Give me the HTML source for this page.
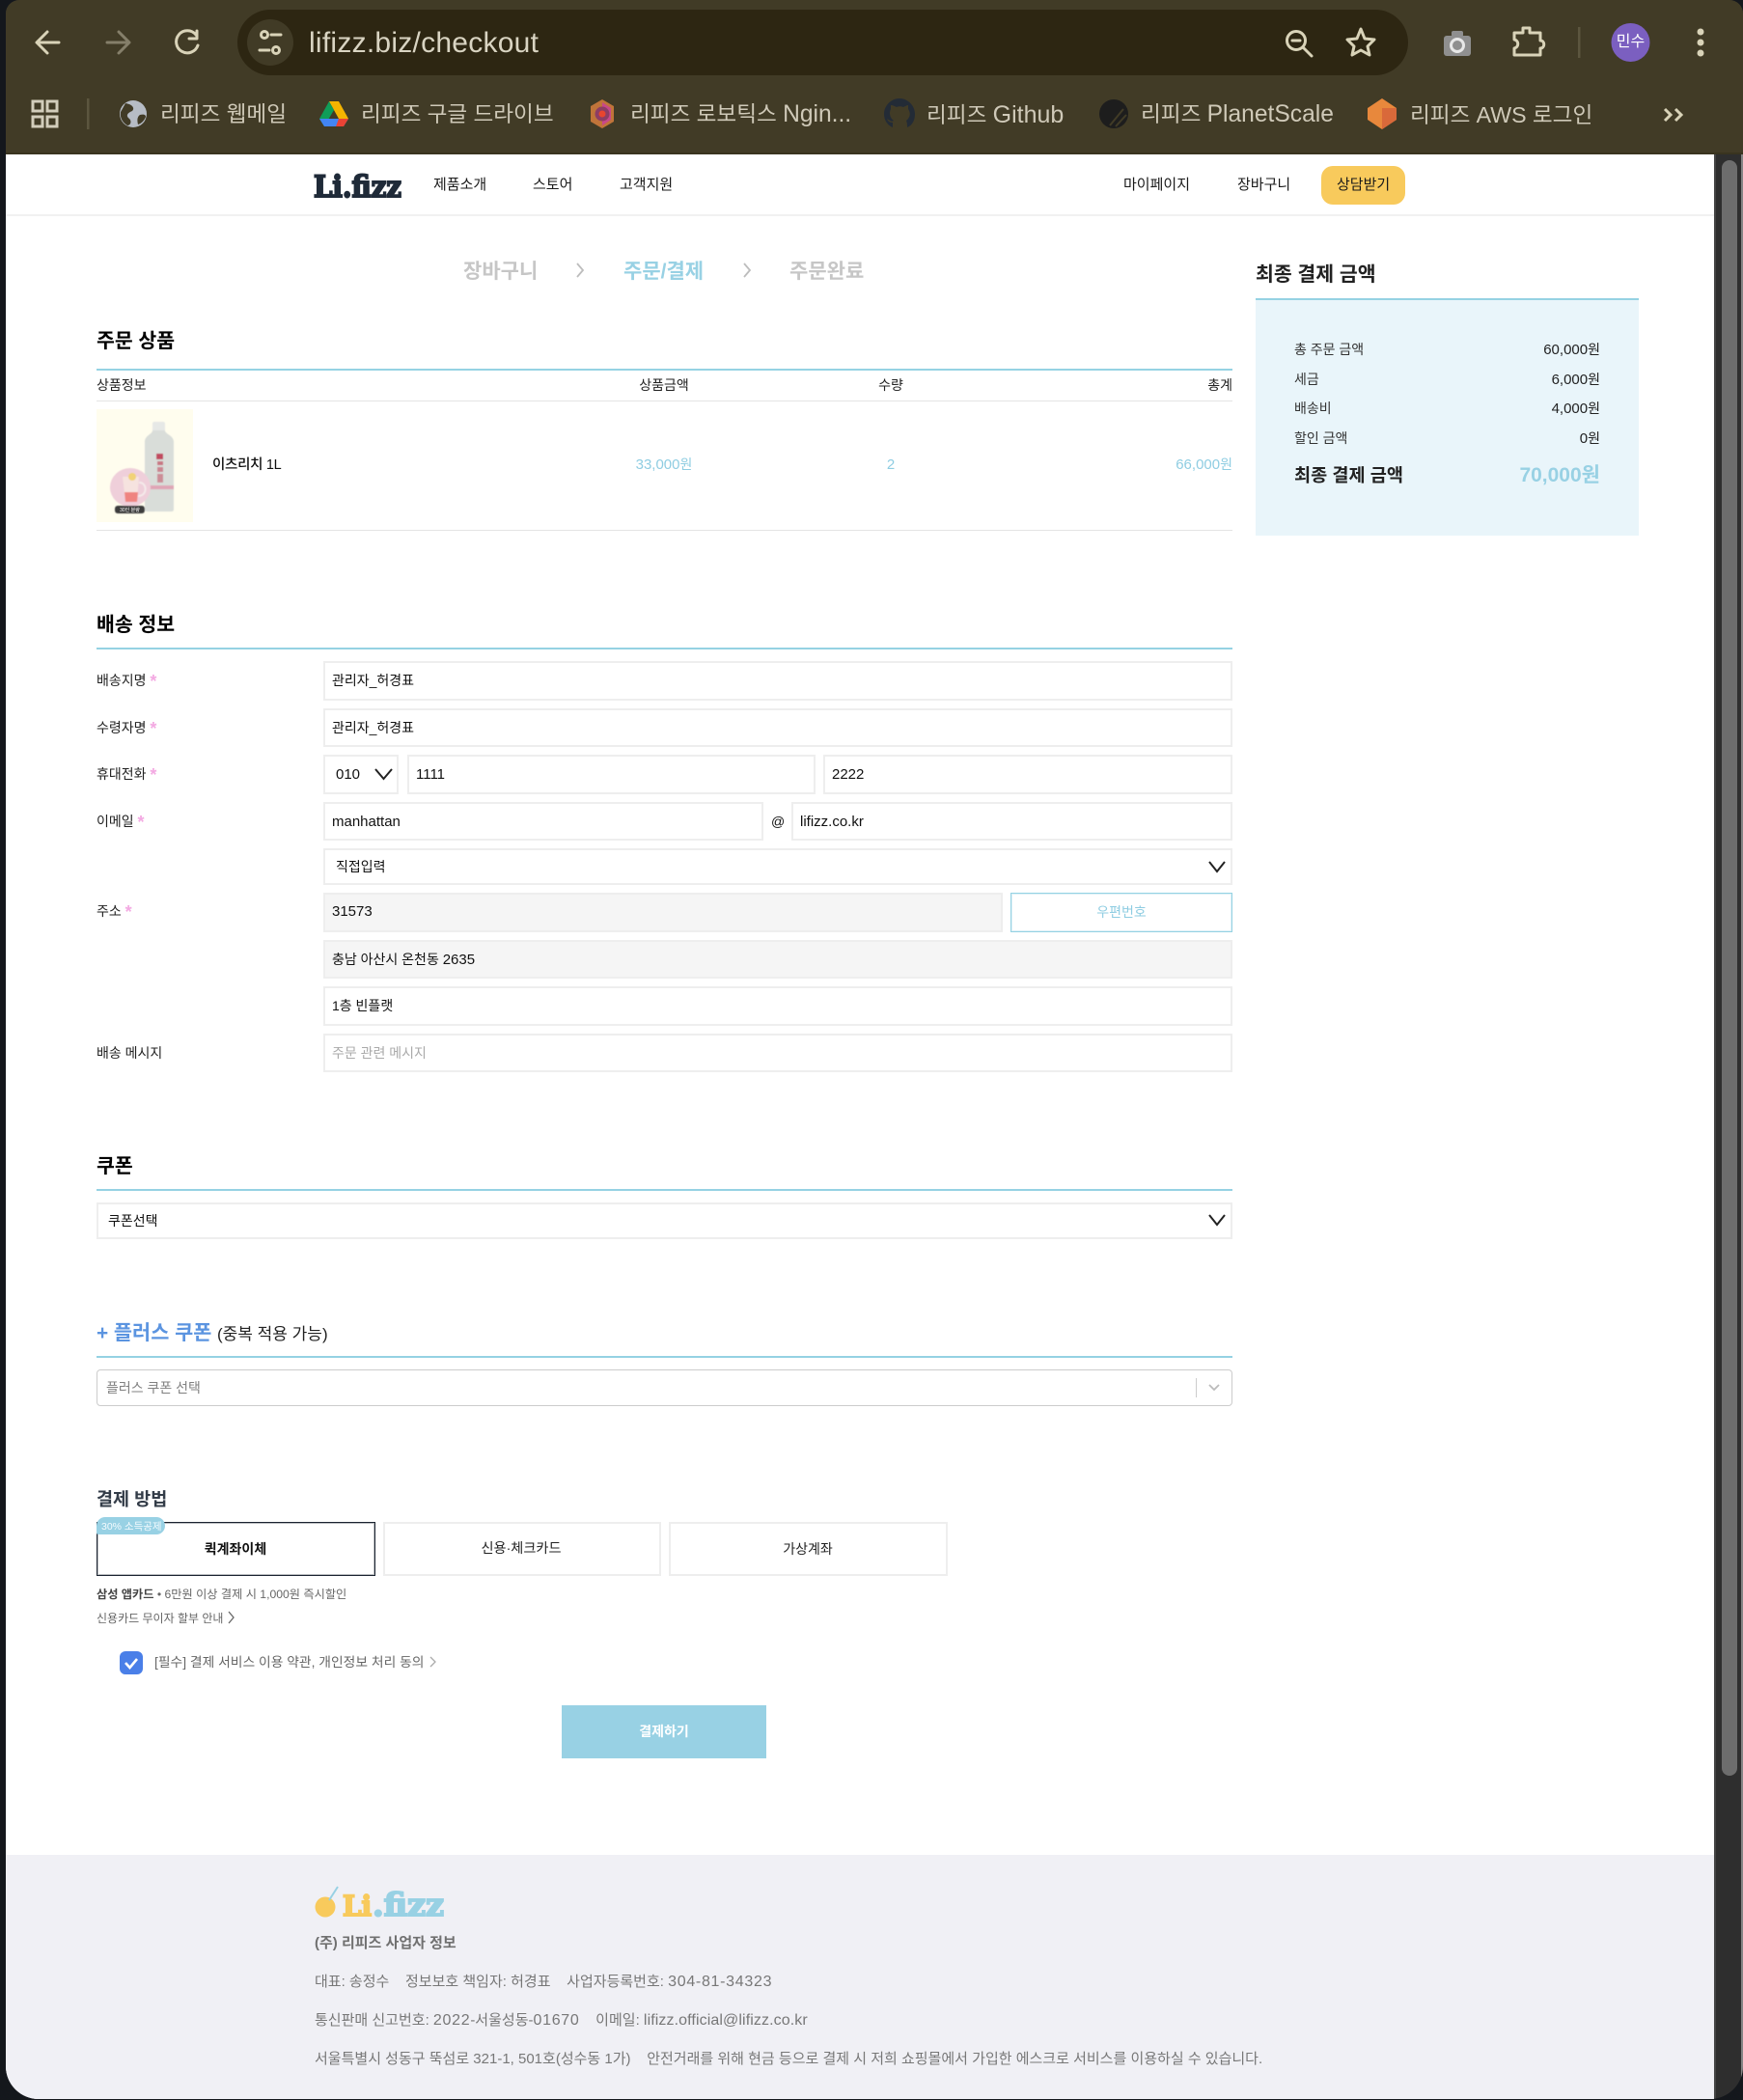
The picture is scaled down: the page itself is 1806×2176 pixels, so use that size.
<!DOCTYPE html>
<html lang="ko"><head><meta charset="utf-8"><title>lifizz.biz/checkout</title>
<style>
html,body{margin:0;padding:0;background:#14171c;width:1806px;height:2176px;overflow:hidden}
body{font-family:"Liberation Sans","Noto Sans CJK KR",sans-serif;color:#111;position:relative}
#w{position:absolute;left:6px;top:0;width:1800px;height:2175px;border-radius:14px 14px 34px 34px;overflow:hidden;background:#2e2e2e}
#in{position:absolute;left:-6px;top:0;width:1806px;height:2176px}
.b{position:absolute;box-sizing:border-box}
.t{position:absolute;white-space:nowrap;line-height:20px;height:20px;margin-top:1px}
.c{transform:translateX(-50%)}
.bm{font-size:22.6px;color:#cfc9b8;line-height:30px;height:30px;top:103px}
.bm span{font-size:24.6px}
.nav{font-size:15px;color:#1a1a1a;top:181px}
.h{font-size:20.5px;font-weight:700;color:#000;line-height:30px;height:30px;margin-top:2px}
.line{position:absolute;left:100px;width:1177px;height:2px;background:#95d2e3}
.hr{position:absolute;left:100px;width:1177px;height:1px;background:#e4e4e4}
.f{font-size:14px;color:#222}
.i{position:absolute;box-sizing:border-box;border:2px solid #eeeeee;background:#fff}
.g{background:#f5f5f5}
.v{font-size:14px;color:#111}
.l{font-size:15px}
.s{color:#f3a9e2;font-size:18px;line-height:14px;font-weight:700;vertical-align:-2px}
.m{font-size:14px;color:#333}
.blue{color:#8fcde2}
.ft{font-size:15px;color:#777}
.ft .d{font-size:16px;letter-spacing:.7px}
.ft .e{font-size:16px;letter-spacing:.1px}
</style></head><body>
<div id="w"><div id="in">
<div class="b" style="left:0;top:0;width:1806px;height:158px;background:#413b26"></div>
<div class="b" style="left:0;top:158px;width:1806px;height:2px;background:#39341f"></div>
<div class="b" style="left:246px;top:10px;width:1213px;height:68px;border-radius:34px;background:#2d2612"></div>
<div class="b" style="left:256px;top:20px;width:48px;height:48px;border-radius:50%;background:#413b26"></div>
<div class="t" style="left:320px;top:29px;font-size:30px;line-height:30px;height:30px;color:#d9d4c2;letter-spacing:.25px">lifizz.biz/checkout</div>

<svg style="position:absolute;left:0;top:0" width="1806" height="160" viewBox="0 0 1806 160">
<g fill="none" stroke="#d9d3b8" stroke-width="3" stroke-linecap="round" stroke-linejoin="round">
<path d="M61 44H39M49 33L38 44L49 55"/>
<path d="M111 44H133M123 33L134 44L123 55" stroke="#857f6a"/>
<path d="M203 36A11.500 11.500 0 1 0 205 47M204 32V40H196"/>
<circle cx="274" cy="36" r="3.500"/><path d="M281 36H291M269 52H279"/><circle cx="286" cy="52" r="3.500"/>
<circle cx="1343" cy="42" r="9.500"/><path d="M1350 49L1359 58M1339 42H1347"/>
<path d="M1410 30L1414 40L1424 41L1417 48L1419 57L1410 52L1401 57L1403 48L1396 41L1406 40Z"/>
<path d="M1569 34H1578V29H1585V34H1596V42C1601 42 1601 50 1596 50V57H1569V50C1574 49 1574 42 1569 41Z"/>
</g>
<rect x="1496" y="37" width="28" height="21" rx="3" fill="#8f8f8f"/><rect x="1504" y="32" width="12" height="6" rx="2" fill="#8f8f8f"/><circle cx="1510" cy="47" r="6.500" fill="none" stroke="#e8e8e8" stroke-width="3"/>
<rect x="1635" y="28" width="2.500" height="32" fill="#5c563f"/>
<ellipse cx="1689.500" cy="44" rx="20" ry="20" fill="#7b5fc0"/>
<g fill="#d9d3b8"><circle cx="1762" cy="33" r="3.500"/><circle cx="1762" cy="44" r="3.500"/><circle cx="1762" cy="55" r="3.500"/></g>
<g fill="none" stroke="#d2cdbb" stroke-width="3"><rect x="34" y="105" width="10" height="10"/><rect x="49" y="105" width="10" height="10"/><rect x="34" y="121" width="10" height="10"/><rect x="49" y="121" width="10" height="10"/></g>
<rect x="90" y="102" width="2.500" height="32" fill="#5c563f"/>
<circle cx="138" cy="118" r="14" fill="#b6bcc5"/><path d="M130 107C137 108 140 112 137 115C132 117 130 120 134 123C137 126 135 130 132 130C127 127 124 122 125 116ZM145 119C149 118 151 119 151 121C149 126 146 128 143 129C142 125 142 121 145 119Z" fill="#413b26"/>
<path d="M341 105H351L361 123H351Z" fill="#f4b400"/><path d="M341 105L331 123L336 131L346 114Z" fill="#0f9d58"/><path d="M336 131H356L361 123H331Z" fill="#4285f4"/><path d="M356 131L361 123H351L348 131Z" fill="#ea4335"/>
<path d="M624 103L636 110V126L624 133L612 126V110Z" fill="#c0743a"/><path d="M624 106L633 112V124L624 130Z" fill="#c8478a"/><circle cx="624" cy="118" r="7.500" fill="#8d3d64"/><circle cx="624" cy="118" r="3.500" fill="#e8452f"/>
<path d="M932 102C923 102 916 110 916 118C916 125 920 130 925 132V127C921 127 920 125 919 123C921 124 924 127 926 125C922 122 921 117 923 113V109C925 109 927 110 929 111C931 110 934 110 936 111C938 110 940 109 941 109V113C944 117 943 122 939 125C940 127 940 130 940 132C945 130 948 125 948 118C948 110 941 102 932 102Z" fill="#232b36"/>
<circle cx="1154" cy="118" r="15" fill="#1d1d1d"/><path d="M1150 130L1164 113M1156 131L1167 119" stroke="#413b26" stroke-width="2"/>
<path d="M1432 102L1447 112V124L1432 134L1417 124V112Z" fill="#e8883c"/><path d="M1432 112L1447 112V124L1432 134Z" fill="#d9693a"/>
<path d="M1725 113L1731 119L1725 125M1736 113L1742 119L1736 125" fill="none" stroke="#d9d3b8" stroke-width="3"/>
</svg>
<div class="t" style="left:1689.500px;top:33px;font-size:16px;color:#fff;transform:translateX(-50%)">민수</div>
<div class="t bm" style="left:166px">리피즈 웹메일</div>
<div class="t bm" style="left:374px">리피즈 구글 드라이브</div>
<div class="t bm" style="left:653px">리피즈 로보틱스 <span>Ngin...</span></div>
<div class="t bm" style="left:960px">리피즈 <span style="font-size:25px">Github</span></div>
<div class="t bm" style="left:1182px">리피즈 <span>PlanetScale</span></div>
<div class="t bm" style="left:1461px">리피즈 <span style="font-size:23.2px">AWS</span> 로그인</div>

<div class="b" style="left:0;top:160px;width:1776px;height:2016px;background:#fff"></div>
<div class="b" style="left:0;top:222px;width:1776px;height:2px;background:#f1f1f1"></div>
<div class="b" style="left:1776px;top:160px;width:2px;height:2016px;background:#444"></div>
<div class="b" style="left:1804px;top:160px;width:2px;height:2016px;background:#858585"></div>
<div class="b" style="left:1784px;top:166px;width:16px;height:1674px;border-radius:8px;background:#6d6d6d"></div>

<svg style="position:absolute;left:0;top:160px" width="500" height="60"><text x="325" y="44" font-family="DejaVu Serif" font-weight="700" font-size="31" fill="#1f2a38" stroke="#1f2a38" stroke-width="2" textLength="91" lengthAdjust="spacingAndGlyphs">Li.fizz</text></svg>
<div class="t nav" style="left:449px">제품소개</div>
<div class="t nav" style="left:552px">스토어</div>
<div class="t nav" style="left:642px">고객지원</div>
<div class="t nav" style="left:1164px">마이페이지</div>
<div class="t nav" style="left:1282px">장바구니</div>
<div class="b" style="left:1369px;top:172px;width:87px;height:40px;border-radius:12px;background:#f8ca5c"></div>
<div class="t nav" style="left:1385px">상담받기</div>

<div class="t" style="left:480px;top:265px;margin-top:2px;font-size:21px;line-height:30px;height:30px;font-weight:700;color:#c6c6c6">장바구니</div>
<div class="t" style="left:646px;top:265px;margin-top:2px;font-size:21px;line-height:30px;height:30px;font-weight:700;color:#98d1e4">주문/결제</div>
<div class="t" style="left:818px;top:265px;margin-top:2px;font-size:21px;line-height:30px;height:30px;font-weight:700;color:#c6c6c6">주문완료</div>
<svg style="position:absolute;left:590px;top:264px" width="200" height="30" fill="none" stroke="#bdbdbd" stroke-width="1.800"><path d="M8 9L14 16L8 23M181 9L187 16L181 23"/></svg>

<div class="t h" style="left:100px;top:337px">주문 상품</div>
<div class="line" style="top:382px"></div>
<div class="t f" style="left:100px;top:388px">상품정보</div>
<div class="t f c" style="left:688px;top:388px">상품금액</div>
<div class="t f c" style="left:923px;top:388px">수량</div>
<div class="t f" style="right:529px;top:388px">총계</div>
<div class="hr" style="top:415px"></div>
<svg style="position:absolute;left:100px;top:424px" width="100" height="117" viewBox="0 0 100 117">
<rect width="100" height="117" fill="#fffdee"/>
<g filter="url(#bl)">
<rect x="58" y="13" width="13" height="11" rx="2" fill="#e6e8e6"/>
<path d="M50 34C50 27 58 26 58 22H71C71 26 80 27 80 34V104C80 106 78 106 77 106H53C52 106 50 106 50 104Z" fill="#d9ddd9"/>
<rect x="50" y="79" width="30" height="4" fill="#dfa6b6"/>
<rect x="62" y="46" width="7" height="6" fill="#c14b60"/><rect x="63" y="54" width="6" height="4" fill="#c14b60" opacity=".7"/><rect x="63" y="60" width="6" height="5" fill="#c14b60" opacity=".6"/><rect x="63" y="67" width="6" height="9" fill="#c14b60" opacity=".55"/>
<ellipse cx="35" cy="81" rx="21" ry="20" fill="#efcfda"/>
<path d="M27 70H44L42 96H30Z" fill="#f6e3df"/><path d="M29 86H43L42 96H30Z" fill="#ef8480"/><circle cx="37" cy="70" r="4" fill="#f1d277"/>
<path d="M44 76C53 76 53 90 43 90" fill="none" stroke="#f4eaea" stroke-width="2"/>
<rect x="19" y="100" width="31" height="8" rx="3" fill="#3c3c3c"/>
</g>
<text x="34.500" y="106" font-size="5" fill="#fff" text-anchor="middle">30인 분량</text>
<defs><filter id="bl"><feGaussianBlur stdDeviation=".4"/></filter></defs>
</svg>
<div class="t" style="left:220px;top:471px;font-size:14.5px;font-weight:500;color:#111;letter-spacing:-.3px">이츠리치 1L</div>
<div class="t f c blue" style="left:688px;top:470px"><span class="l">33,000</span>원</div>
<div class="t f c blue" style="left:923px;top:470px"><span class="l">2</span></div>
<div class="t f blue" style="right:529px;top:470px"><span class="l">66,000</span>원</div>
<div class="hr" style="top:549px"></div>

<div class="t h" style="left:1301px;top:268px;color:#222">최종 결제 금액</div>
<div class="b" style="left:1301px;top:309px;width:397px;height:246px;background:#e9f5fa;border-top:2px solid #95d2e3"></div>
<div class="t m" style="left:1341px;top:351px">총 주문 금액</div><div class="t m" style="right:148px;top:351px;color:#222"><span class="l">60,000</span>원</div>
<div class="t m" style="left:1341px;top:382px">세금</div><div class="t m" style="right:148px;top:382px;color:#222"><span class="l">6,000</span>원</div>
<div class="t m" style="left:1341px;top:412px">배송비</div><div class="t m" style="right:148px;top:412px;color:#222"><span class="l">4,000</span>원</div>
<div class="t m" style="left:1341px;top:443px">할인 금액</div><div class="t m" style="right:148px;top:443px;color:#222"><span class="l">0</span>원</div>
<div class="t" style="left:1341px;top:481px;font-size:18.6px;line-height:22px;height:22px;font-weight:700;color:#222">최종 결제 금액</div>
<div class="t" style="right:148px;top:481px;font-size:21px;line-height:22px;height:22px;font-weight:700;color:#98d1e4">70,000원</div>

<div class="t h" style="left:100px;top:631px">배송 정보</div>
<div class="line" style="top:671px"></div>

<div class="t f" style="left:100px;top:694px">배송지명 <span class="s">*</span></div>
<div class="t f" style="left:100px;top:743px">수령자명 <span class="s">*</span></div>
<div class="t f" style="left:100px;top:791px">휴대전화 <span class="s">*</span></div>
<div class="t f" style="left:100px;top:840px">이메일 <span class="s">*</span></div>
<div class="t f" style="left:100px;top:933px">주소 <span class="s">*</span></div>
<div class="t f" style="left:100px;top:1080px">배송 메시지</div>

<div class="i" style="left:335px;top:685px;width:942px;height:41px"></div><div class="t v" style="left:344px;top:694px">관리자_허경표</div>
<div class="i" style="left:335px;top:734px;width:942px;height:40px"></div><div class="t v" style="left:344px;top:743px">관리자_허경표</div>
<div class="i" style="left:335px;top:782px;width:78px;height:41px"></div><div class="t v" style="left:348px;top:792px;font-size:15px">010</div>
<svg style="position:absolute;left:385px;top:792px" width="26" height="20" fill="none" stroke="#222" stroke-width="2"><path d="M4 5L12.500 15L21 5"/></svg>
<div class="i" style="left:422px;top:782px;width:423px;height:41px"></div><div class="t v l" style="left:431px;top:792px">1111</div>
<div class="i" style="left:853px;top:782px;width:424px;height:41px"></div><div class="t v l" style="left:862px;top:792px">2222</div>
<div class="i" style="left:335px;top:831px;width:456px;height:40px"></div><div class="t v l" style="left:344px;top:841px">manhattan</div>
<div class="t v" style="left:799px;top:840px">@</div>
<div class="i" style="left:820px;top:831px;width:457px;height:40px"></div><div class="t v l" style="left:829px;top:841px">lifizz.co.kr</div>
<div class="i" style="left:335px;top:879px;width:942px;height:38px"></div><div class="t v" style="left:348px;top:887px">직접입력</div>
<svg style="position:absolute;left:1249px;top:888px" width="24" height="20" fill="none" stroke="#222" stroke-width="2"><path d="M4 5L12 15L20 5"/></svg>
<div class="i g" style="left:335px;top:925px;width:704px;height:41px"></div><div class="t v l" style="left:344px;top:934px">31573</div>
<div class="i" style="left:1047px;top:925px;width:230px;height:41px;border:1px solid #95d2e3;box-shadow:inset 0 0 0 1px rgba(149,210,227,.3)"></div><div class="t f c blue" style="left:1162px;top:934px">우편번호</div>
<div class="i g" style="left:335px;top:974px;width:942px;height:40px"></div><div class="t v" style="left:344px;top:983px">충남 아산시 온천동 <span class="l">2635</span></div>
<div class="i" style="left:335px;top:1022px;width:942px;height:41px"></div><div class="t v" style="left:344px;top:1031px">1층 빈플랫</div>
<div class="i" style="left:335px;top:1071px;width:942px;height:40px"></div><div class="t v" style="left:344px;top:1080px;color:#aaa">주문 관련 메시지</div>

<div class="t h" style="left:100px;top:1192px">쿠폰</div>
<div class="line" style="top:1232px"></div>
<div class="i" style="left:100px;top:1246px;width:1177px;height:38px"></div><div class="t v" style="left:112px;top:1254px">쿠폰선택</div>
<svg style="position:absolute;left:1249px;top:1254px" width="24" height="20" fill="none" stroke="#222" stroke-width="2"><path d="M4 5L12 15L20 5"/></svg>

<div class="t" style="left:100px;top:1366px;font-size:20.8px;line-height:30px;height:30px;font-weight:700;color:#5b94e0">+ 플러스 쿠폰</div>
<div class="t" style="left:225px;top:1371px;font-size:17px;line-height:22px;height:22px;color:#222">(중복 적용 가능)</div>
<div class="line" style="top:1405px"></div>
<div class="b" style="left:100px;top:1419px;width:1177px;height:38px;border:1.500px solid #ccc;border-radius:4px;background:#fff"></div>
<div class="t" style="left:110px;top:1427px;font-size:14px;color:#808080">플러스 쿠폰 선택</div>
<div class="b" style="left:1239px;top:1428px;width:1px;height:20px;background:#ccc"></div>
<svg style="position:absolute;left:1250px;top:1430px" width="16" height="16" fill="none" stroke="#bbb" stroke-width="1.800"><path d="M3 5L8 10L13 5"/></svg>

<div class="t" style="left:100px;top:1541px;font-size:18.5px;line-height:24px;height:24px;font-weight:700;color:#333c48">결제 방법</div>
<div class="b" style="left:100px;top:1577px;width:289px;height:56px;border:1px solid #1b2330;box-shadow:inset 0 0 0 1px rgba(27,35,48,.3);background:#fff"></div>
<div class="i" style="left:397px;top:1577px;width:288px;height:56px"></div>
<div class="i" style="left:693px;top:1577px;width:289px;height:56px"></div>
<div class="b" style="left:100px;top:1572px;width:71px;height:18px;border-radius:9px 9px 9px 2px;background:#98d1e4"></div>
<div class="t" style="left:105px;top:1571px;font-size:10.5px;color:#f4fbfe">30% 소득공제</div>
<div class="t c" style="left:244px;top:1594px;font-size:14px;font-weight:700;color:#111">퀵계좌이체</div>
<div class="t c" style="left:540px;top:1594px;font-size:14.2px;color:#222">신용·체크카드</div>
<div class="t c" style="left:837px;top:1594px;font-size:14px;color:#222">가상계좌</div>
<div class="t" style="left:100px;top:1641px;font-size:12.2px;color:#666"><b style="color:#444">삼성 앱카드</b> • 6만원 이상 결제 시 1,000원 즉시할인</div>
<div class="t" style="left:100px;top:1666px;font-size:12px;color:#666">신용카드 무이자 할부 안내</div>
<svg style="position:absolute;left:234px;top:1668px" width="12" height="16" fill="none" stroke="#666" stroke-width="1.300"><path d="M3 2L8 8L3 14"/></svg>
<div class="b" style="left:124px;top:1711px;width:24px;height:24px;border-radius:6px;background:#4a7fe8"></div>
<svg style="position:absolute;left:124px;top:1711px" width="24" height="24" fill="none" stroke="#fff" stroke-width="2.600"><path d="M6 12L10.500 17L18 8"/></svg>
<div class="t" style="left:160px;top:1712px;font-size:13.8px;color:#666">[필수] 결제 서비스 이용 약관, 개인정보 처리 동의</div>
<svg style="position:absolute;left:444px;top:1715px" width="10" height="14" fill="none" stroke="#aaa" stroke-width="1.300"><path d="M2 2L7 7L2 12"/></svg>
<div class="b" style="left:582px;top:1767px;width:212px;height:55px;background:#98d1e4"></div>
<div class="t c" style="left:688px;top:1783px;font-size:14px;font-weight:700;color:#fff">결제하기</div>

<div class="b" style="left:0;top:1922px;width:1776px;height:254px;background:#f0f0f5"></div>
<svg style="position:absolute;left:320px;top:1945px" width="150" height="50">
<circle cx="17" cy="31" r="10.500" fill="#f8ca5c"/><path d="M21 24L30 10" stroke="#98d1e4" stroke-width="2"/>
<text x="35" y="40" font-family="DejaVu Serif" font-weight="700" font-size="29" fill="#f8ca5c" stroke="#f8ca5c" stroke-width="2" textLength="30" lengthAdjust="spacingAndGlyphs">Li</text>
<text x="66" y="40" font-family="DejaVu Serif" font-weight="700" font-size="33" fill="#98d1e4" stroke="#98d1e4" stroke-width="2" textLength="74" lengthAdjust="spacingAndGlyphs">.fizz</text>
</svg>
<div class="t" style="left:326px;top:2003px;font-size:15px;font-weight:700;color:#707070">(주) 리피즈 사업자 정보</div>
<div class="t ft" style="left:326px;top:2043px">대표: 송정수 &nbsp;&nbsp; 정보보호 책임자: 허경표 &nbsp;&nbsp; 사업자등록번호: <span class="d">304-81-34323</span></div>
<div class="t ft" style="left:326px;top:2083px">통신판매 신고번호: <span class="d">2022</span>-서울성동-<span class="d">01670</span> &nbsp;&nbsp; 이메일: <span class="e">lifizz.official@lifizz.co.kr</span></div>
<div class="t ft" style="left:326px;top:2123px">서울특별시 성동구 뚝섬로 321-1, 501호(성수동 1가) &nbsp;&nbsp; 안전거래를 위해 현금 등으로 결제 시 저희 쇼핑몰에서 가입한 에스크로 서비스를 이용하실 수 있습니다.</div>
</div></div>
</body></html>
